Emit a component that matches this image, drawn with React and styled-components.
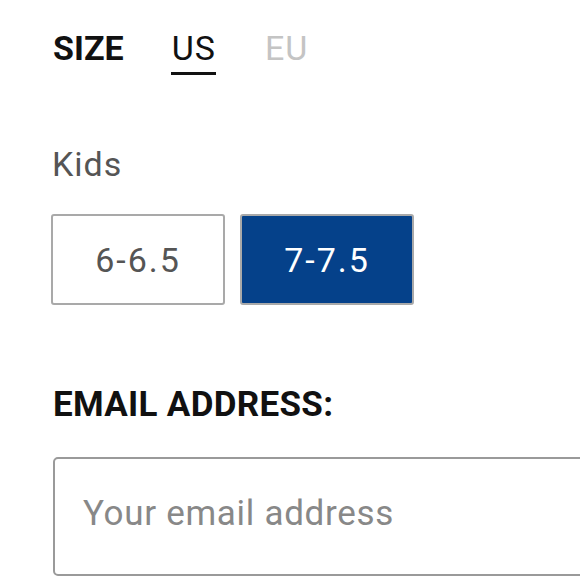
import React from "react";
import styled, { createGlobalStyle } from "styled-components";

const Global = createGlobalStyle`
  html, body { margin: 0; padding: 0; background: #fff; }
  body { font-family: Roboto, "Noto Sans", sans-serif; width: 580px; height: 580px; overflow: hidden; }
`;

const Page = styled.div`
  padding: 26px 0 0 53px;
  display: flex;
  flex-direction: column;
`;

const TabRow = styled.div`
  display: flex;
  align-items: flex-start;
  height: 76px;
`;

const Title = styled.div`
  font-size: 34px;
  font-weight: 700;
  color: #111;
  line-height: 44px;
  margin-right: 48px;
`;

const Tab = styled.div`
  font-size: 34px;
  font-weight: 400;
  line-height: 44px;
  letter-spacing: 1px;
  margin-right: 49px;
  color: ${p => (p.active ? "#111" : "#c4c4c4")};
  position: relative;
  &::after {
    content: "";
    display: ${p => (p.active ? "block" : "none")};
    position: absolute;
    left: -1px;
    right: 0;
    top: 46px;
    height: 3px;
    background: #111;
  }
`;

const GroupLabel = styled.div`
  margin-top: 42px;
  font-size: 34px;
  line-height: 40px;
  letter-spacing: 1px;
  color: #555;
  margin-left: -1px;
`;

const SizeRow = styled.div`
  margin-top: 30px;
  margin-left: -2px;
  display: flex;
  gap: 15px;
`;

const SizeButton = styled.div`
  width: 174px;
  height: 91px;
  box-sizing: border-box;
  border: 2px solid #a9a9a9;
  border-radius: 3px;
  background: ${p => (p.selected ? "#05418a" : "#fff")};
  color: ${p => (p.selected ? "#fff" : "#555")};
  display: flex;
  align-items: center;
  justify-content: center;
  font-size: 34px;
  letter-spacing: 2px;
`;

const FieldLabel = styled.div`
  margin-top: 80px;
  font-size: 35px;
  font-weight: 700;
  color: #111;
  line-height: 40px;
  letter-spacing: 0.3px;
`;

const Input = styled.div`
  margin-top: 32px;
  width: 560px;
  height: 119px;
  box-sizing: border-box;
  border: 2px solid #9a9a9a;
  border-radius: 5px;
  display: flex;
  align-items: center;
  padding: 0 0 6px 28px;
  font-size: 35px;
  color: #888;
  letter-spacing: 0.7px;
`;

export default function App() {
  return (
    <>
      <Global />
      <Page>
        <TabRow>
          <Title>SIZE</Title>
          <Tab active>US</Tab>
          <Tab>EU</Tab>
        </TabRow>
        <GroupLabel>Kids</GroupLabel>
        <SizeRow>
          <SizeButton>6-6.5</SizeButton>
          <SizeButton selected>7-7.5</SizeButton>
        </SizeRow>
        <FieldLabel>EMAIL ADDRESS:</FieldLabel>
        <Input>Your email address</Input>
      </Page>
    </>
  );
}
